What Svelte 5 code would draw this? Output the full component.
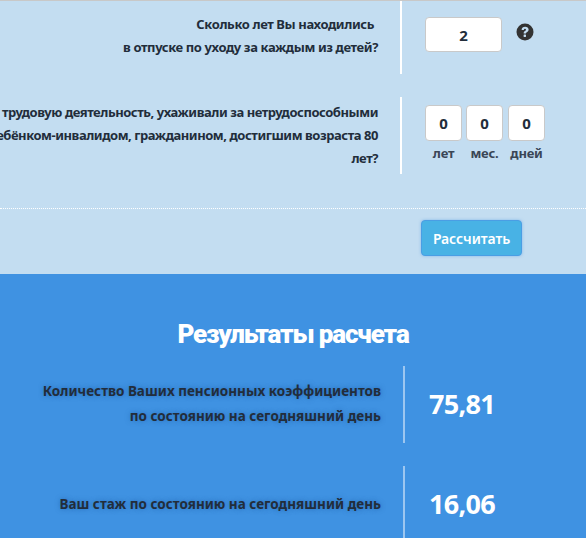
<script>
  const results = [
    { lines: ['Количество Ваших пенсионных коэффициентов', 'по состоянию на сегодняшний день'], value: '75,81' },
    { lines: ['Ваш стаж по состоянию на сегодняшний день'], value: '16,06' }
  ];
  const parts = [
    { v: '0', l: 'лет' },
    { v: '0', l: 'мес.' },
    { v: '0', l: 'дней' }
  ];
</script>

<div class="page">
  <section class="form">
    <div class="row first">
      <div class="label">
        <span class="pad">Сколько лет Вы находились</span>
        <span>в отпуске по уходу за каждым из детей?</span>
      </div>
      <div class="control">
        <div class="box wide">2</div>
        <svg class="help" viewBox="0 0 18 18" width="18" height="18" aria-hidden="true">
          <circle cx="9" cy="9" r="8.5" fill="#333" />
          <path d="M5.6 6.9C5.7 4.8 7.2 3.7 9.1 3.7c2 0 3.5 1.1 3.5 2.9 0 1.4-.9 2.1-1.7 2.6-.7.4-.9.7-.9 1.4H7.7c-.1-1.4.3-2.1 1.2-2.6.7-.4 1.1-.7 1.1-1.3 0-.6-.4-.9-1-.9-.7 0-1.1.4-1.2 1.1H5.6z" fill="#c3ddf1" />
          <rect x="7.6" y="11.5" width="2.4" height="2.5" rx=".4" fill="#c3ddf1" />
        </svg>
      </div>
    </div>
    <div class="row second">
      <div class="label">
        <span>трудовую деятельность, ухаживали за нетрудоспособными</span>
        <span>ребёнком-инвалидом, гражданином, достигшим возраста 80</span>
        <span>лет?</span>
      </div>
      <div class="control triple">
        {#each parts as p}
          <div class="part">
            <div class="box">{p.v}</div>
            <div class="unit">{p.l}</div>
          </div>
        {/each}
      </div>
    </div>
    <div class="actions">
      <button type="button">Рассчитать</button>
    </div>
  </section>

  <section class="results">
    <h2>Результаты расчета</h2>
    {#each results as r, i}
      <div class="res" class:last={i === 1}>
        <div class="res-label">
          {#each r.lines as line}<span>{line}</span>{/each}
        </div>
        <div class="res-value">{r.value}</div>
      </div>
    {/each}
  </section>
</div>

<style>
  :global(body) {
    margin: 0;
    overflow: hidden;
    font-family: "Noto Sans", "Open Sans", sans-serif;
  }
  .page {
    width: 586px;
    height: 538px;
    overflow: hidden;
    background: #3f92e2;
  }
  .form {
    height: 274px;
    box-sizing: border-box;
    background: #c3ddf1;
    border-top: 1px solid #c8c8c8;
    color: #222d3b;
    display: flex;
    flex-direction: column;
  }
  .row {
    display: flex;
  }
  .first {
    height: 73px;
  }
  .second {
    margin-top: 23px;
    height: 77px;
  }
  .label {
    width: 378px;
    flex: none;
    display: flex;
    flex-direction: column;
    align-items: flex-end;
    font-size: 13px;
    letter-spacing: -.39px;
    font-weight: 700;
    line-height: 23px;
    white-space: nowrap;
    padding-top: 12px;
    box-sizing: border-box;
  }
  .second .label {
    padding-top: 4px;
    letter-spacing: -.45px;
  }
  .pad {
    padding-right: 4px;
  }
  .control {
    margin-left: 22px;
    flex: 1;
    border-left: 2px solid #fff;
    padding-left: 23px;
    display: flex;
    align-items: flex-start;
  }
  .first .control {
    padding-top: 16px;
    gap: 14px;
  }
  .second .control {
    padding-top: 8px;
    gap: 4px;
  }
  .box {
    width: 37px;
    height: 36px;
    box-sizing: border-box;
    background: #fff;
    border: 1px solid #c9c9c9;
    border-radius: 4px;
    display: flex;
    align-items: center;
    justify-content: center;
    font-size: 15px;
    font-weight: 700;
  }
  .wide {
    width: 77px;
    height: 35px;
  }
  .help {
    margin-top: 6px;
  }
  .part {
    display: flex;
    flex-direction: column;
    align-items: center;
  }
  .part:last-child {
    margin-left: 1px;
  }
  .unit {
    font-size: 13px;
    font-weight: 700;
    letter-spacing: -.2px;
    line-height: 18px;
    margin-top: 3px;
    color: #3a4656;
    white-space: nowrap;
  }
  .actions {
    margin-top: 34px;
    border-top: 1px dotted #fff;
    padding: 11px 0 0 421px;
  }
  button {
    width: 101px;
    height: 36px;
    box-sizing: border-box;
    padding: 0;
    background: #48b2e5;
    border: 1px solid #4a9ee4;
    border-radius: 4px;
    box-shadow: 0 0 3px rgba(63, 146, 226, .5);
    color: #fff;
    font-family: inherit;
    font-size: 14px;
    font-weight: 600;
    letter-spacing: -.1px;
  }
  .results {
    color: #fff;
  }
  h2 {
    margin: 0;
    padding-top: 43px;
    height: 92px;
    box-sizing: border-box;
    text-align: center;
    font-family: "Roboto", sans-serif;
    font-size: 26px;
    letter-spacing: -1.15px;
    line-height: 34px;
    font-weight: 900;
  }
  .res {
    display: flex;
    height: 77px;
    margin-bottom: 23px;
  }
  .res.last {
    height: 80px;
    margin-bottom: 0;
  }
  .res-label {
    width: 381px;
    flex: none;
    box-sizing: border-box;
    display: flex;
    flex-direction: column;
    align-items: flex-end;
    justify-content: center;
    padding-bottom: 2px;
    color: #222d3b;
    font-size: 13.5px;
    font-weight: 700;
    line-height: 25px;
    white-space: nowrap;
    text-shadow: 0 0 5px rgba(29, 94, 168, .75);
  }
  .res.last .res-label {
    justify-content: flex-start;
    padding: 26px 0 0;
  }
  .res-value {
    margin-left: 22px;
    flex: 1;
    border-left: 2px solid #9cc6f0;
    padding: 0 0 2px 24px;
    display: flex;
    align-items: center;
    font-size: 27px;
    letter-spacing: -.7px;
    font-weight: 700;
  }
  .res.last .res-value {
    align-items: flex-start;
    padding: 19px 0 0 24px;
  }
</style>
